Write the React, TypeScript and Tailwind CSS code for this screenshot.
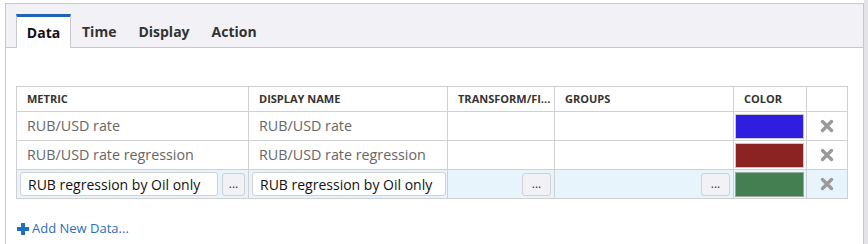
const rows = [
  { metric: 'RUB/USD rate', name: 'RUB/USD rate', color: '#2f1ee0' },
  { metric: 'RUB/USD rate regression', name: 'RUB/USD rate regression', color: '#8b2323' },
]

const tabs = ['Data', 'Time', 'Display', 'Action']

function Dots({ className = '' }: { className?: string }) {
  return (
    <button className={`h-[23px] rounded-[3px] border border-[#d0d0d6] bg-[#f2f2f6] text-[12px] leading-none text-[#333] ${className}`}>
      ...
    </button>
  )
}

function Remove() {
  return (
    <svg viewBox="0 0 14 14" className="mx-auto h-[14px] w-[14px]">
      <path d="M2.5 2.5l9 9M11.5 2.5l-9 9" stroke="#9a9a9a" strokeWidth="3.4" strokeLinecap="round" />
    </svg>
  )
}

export default function App() {
  return (
    <div className="flex h-[244px] w-[868px] bg-white font-['Open_Sans',sans-serif]">
      <div className="ml-[5px] mt-[3px] flex w-[859px] flex-col border-l border-r border-t border-[#c8c8cc]">
        <div className="flex h-[44px] items-end border-b border-[#c8c8cc] bg-[#f2f2f6] pl-[10px]">
          {tabs.map((t, i) =>
            i === 0 ? (
              <div key={t} className="-mb-px flex h-[34px] w-[55px] items-center justify-center border-x border-t-[3px] border-x-[#c8c8cc] border-t-[#1e63b8] bg-white pb-[1px] text-[14px] font-bold text-[#111]">
                {t}
              </div>
            ) : (
              <div key={t} className="flex h-[33px] items-center px-[11px] pt-[2px] text-[14px] font-bold text-[#333]">
                {t}
              </div>
            )
          )}
        </div>

        <div className="px-[10px] pt-[38px]">
          <table className="w-[831px] table-fixed border-collapse text-[14px]">
            <colgroup>
              <col className="w-[232px]" />
              <col className="w-[199px]" />
              <col className="w-[107px]" />
              <col className="w-[179px]" />
              <col className="w-[73px]" />
              <col className="w-[41px]" />
            </colgroup>
            <thead>
              <tr className="h-[25px] text-left text-[11px] font-bold uppercase text-[#333]">
                <th className="border border-[#d0d0d4] px-[10px] pt-[1px]">Metric</th>
                <th className="border border-[#d0d0d4] px-[10px] pt-[1px]">Display Name</th>
                <th className="truncate border border-[#d0d0d4] pl-[10px] pr-[1px] pt-[1px]">Transform/Fi...</th>
                <th className="border border-[#d0d0d4] px-[10px] pt-[1px]">Groups</th>
                <th className="border border-[#d0d0d4] px-[10px] pt-[1px]">Color</th>
                <th className="border border-[#d0d0d4]" />
              </tr>
            </thead>
            <tbody>
              {rows.map(r => (
                <tr key={r.metric} className="h-[29px] text-[14.3px] text-[#666]">
                  <td className="border border-[#d0d0d4] px-[10px]">{r.metric}</td>
                  <td className="border border-[#d0d0d4] px-[10px]">{r.name}</td>
                  <td className="border border-[#d0d0d4]" />
                  <td className="border border-[#d0d0d4]" />
                  <td className="border border-[#d0d0d4] px-[1px]">
                    <div className="h-[25px] w-[69px] border border-[#c8c8d0]" style={{ background: r.color }} />
                  </td>
                  <td className="border border-[#d0d0d4] text-center">
                    <Remove />
                  </td>
                </tr>
              ))}
              <tr className="h-[29px] bg-[#e8f4fc] text-[#111]">
                <td className="border border-[#d0d0d4] px-[3px]">
                  <div className="flex items-center gap-[4px]">
                    <div className="flex h-[24px] w-[198px] items-center rounded-[3px] border border-[#d0d0d6] bg-white px-[7px]">RUB regression by Oil only</div>
                    <Dots className="w-[23px]" />
                  </div>
                </td>
                <td className="border border-[#d0d0d4] px-[3px]">
                  <div className="flex h-[24px] w-[194px] items-center rounded-[3px] border border-[#d0d0d6] bg-white px-[7px]">RUB regression by Oil only</div>
                </td>
                <td className="border border-[#d0d0d4] px-[3px] text-right">
                  <Dots className="w-[29px]" />
                </td>
                <td className="border border-[#d0d0d4] px-[3px] text-right">
                  <Dots className="w-[29px]" />
                </td>
                <td className="border border-[#d0d0d4] px-[1px]">
                  <div className="h-[25px] w-[69px] border border-[#9aa89e] bg-[#447f52]" />
                </td>
                <td className="border border-[#d0d0d4] text-center">
                  <Remove />
                </td>
              </tr>
            </tbody>
          </table>

          <div className="mt-[20px] flex items-center gap-[2px] text-[13px] text-[#2a6ebb]">
            <svg viewBox="0 0 14 14" className="h-[14px] w-[14px]">
              <path d="M5 1h4v4h4v4H9v4H5V9H1V5h4z" fill="#1e6fc0" />
            </svg>
            <span>Add New Data...</span>
          </div>
        </div>
      </div>
      <div className="ml-auto w-[4px] bg-[#e4e4e8]" />
    </div>
  )
}
